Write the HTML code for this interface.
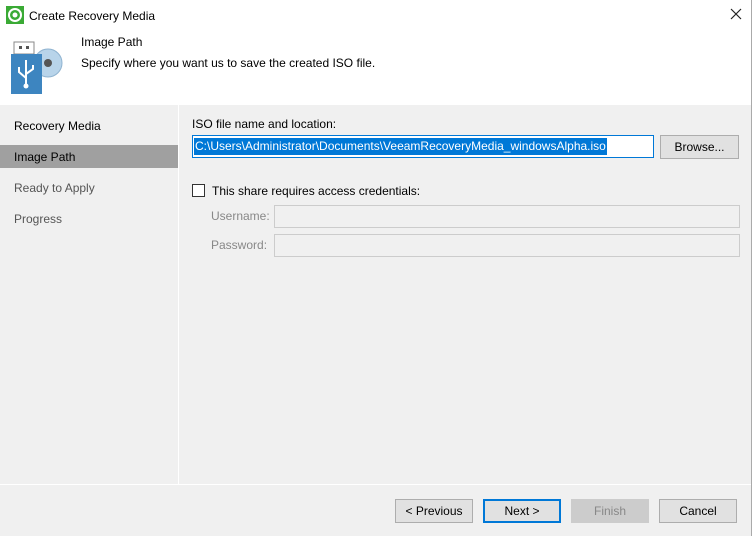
<!DOCTYPE html>
<html><head><meta charset="utf-8"><style>
*{margin:0;padding:0;box-sizing:border-box}
body{width:752px;height:536px;overflow:hidden;background:#f0f0f0;font-family:"Liberation Sans",sans-serif;font-size:12px;color:#000;position:relative}
.abs{position:absolute}
.btn{position:absolute;height:23px;border:1px solid #adadad;background:#e1e1e1;text-align:center;line-height:21px;font-size:12px}
</style></head><body>
<div class="abs" style="left:0;top:0;width:752px;height:105px;background:#fff"></div>
<div class="abs" style="left:751px;top:0;width:1px;height:536px;background:#aaa"></div>
<svg class="abs" style="left:6px;top:6px" width="18" height="18" viewBox="0 0 18 18">
<rect width="18" height="18" fill="#3aaa35"/>
<circle cx="9" cy="9" r="6" fill="none" stroke="#fff" stroke-width="2"/>
<circle cx="9" cy="9" r="2.5" fill="#fff"/>
</svg>
<div class="abs" style="left:29px;top:9px;font-size:12px">Create Recovery Media</div>
<svg class="abs" style="left:730px;top:8px" width="12" height="12" viewBox="0 0 12 12"><path d="M1 1L11 11M11 1L1 11" stroke="#222" stroke-width="1.2"/></svg>
<svg class="abs" style="left:10px;top:40px" width="56" height="56" viewBox="0 0 56 56">
<circle cx="38" cy="23" r="14" fill="#b8d4ea" stroke="#8fb3d0"/>
<circle cx="38" cy="23" r="4" fill="#555"/>
<rect x="4" y="2" width="20" height="12" fill="#fff" stroke="#888"/>
<rect x="9" y="6" width="3" height="3" fill="#555"/><rect x="16" y="6" width="3" height="3" fill="#555"/>
<rect x="1" y="14" width="31" height="40" fill="#3d85c0"/>
<path d="M16 20V44M16 38L9 32V27M16 34L23 29V25" stroke="#fff" stroke-width="2" fill="none"/>
<circle cx="16" cy="46" r="2.5" fill="#fff"/>
</svg>
<div class="abs" style="left:81px;top:35px;font-size:12px">Image Path</div>
<div class="abs" style="left:81px;top:56px;font-size:12px">Specify where you want us to save the created ISO file.</div>
<div class="abs" style="left:178px;top:105px;width:1px;height:379px;background:#fff"></div>
<div class="abs" style="left:0;top:484px;width:751px;height:1px;background:#fff"></div>
<div class="abs" style="left:14px;top:119px;font-size:12px">Recovery Media</div>
<div class="abs" style="left:0;top:145px;width:178px;height:23px;background:#a0a0a0"></div>
<div class="abs" style="left:14px;top:150px;font-size:12px">Image Path</div>
<div class="abs" style="left:14px;top:181px;font-size:12px;color:#555">Ready to Apply</div>
<div class="abs" style="left:14px;top:212px;font-size:12px;color:#555">Progress</div>
<div class="abs" style="left:192px;top:117px">ISO file name and location:</div>
<div class="abs" style="left:192px;top:135px;width:462px;height:23px;background:#fff;border:1px solid #0078d7"></div>
<div class="abs" style="left:194px;top:138px;height:17px;line-height:17px;background:#0078d7;color:#fff;padding:0 1px">C:\Users\Administrator\Documents\VeeamRecoveryMedia_windowsAlpha.iso</div>
<div class="btn" style="left:660px;top:135px;width:79px;height:24px;line-height:22px">Browse...</div>
<div class="abs" style="left:192px;top:184px;width:13px;height:13px;border:1px solid #333;background:#fff"></div>
<div class="abs" style="left:212px;top:184px">This share requires access credentials:</div>
<div class="abs" style="left:211px;top:209px;color:#888">Username:</div>
<div class="abs" style="left:274px;top:205px;width:466px;height:23px;border:1px solid #ccc;background:#f0f0f0"></div>
<div class="abs" style="left:211px;top:238px;color:#888">Password:</div>
<div class="abs" style="left:274px;top:234px;width:466px;height:23px;border:1px solid #ccc;background:#f0f0f0"></div>
<div class="btn" style="left:395px;top:499px;width:78px;height:24px;line-height:22px">&lt; Previous</div>
<div class="btn" style="left:483px;top:499px;width:78px;height:24px;border:2px solid #0078d7;line-height:20px">Next &gt;</div>
<div class="btn" style="left:571px;top:499px;width:78px;height:24px;line-height:22px;border-color:#ccc;background:#ccc;color:#888">Finish</div>
<div class="btn" style="left:659px;top:499px;width:78px;height:24px;line-height:22px">Cancel</div>
</body></html>
